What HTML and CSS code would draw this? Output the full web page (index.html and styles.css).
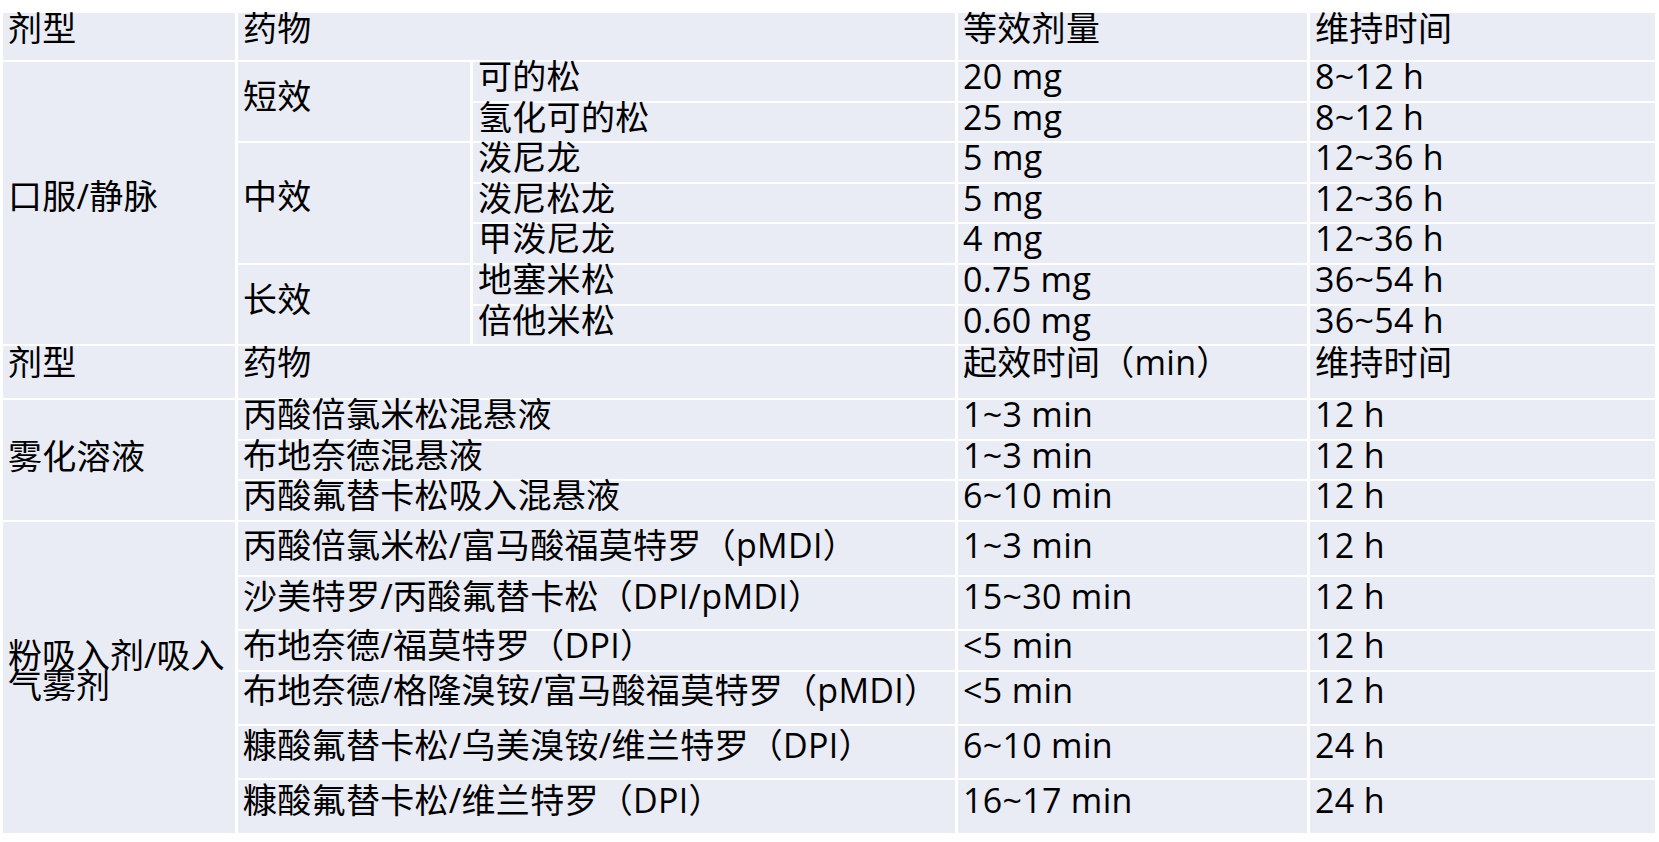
FILE: index.html
```html
<!DOCTYPE html>
<html lang="zh-CN">
<head>
<meta charset="utf-8">
<title>糖皮质激素剂型对照表</title>
<link rel="stylesheet" href="styles.css">
</head>
<body>
<table class="sheet">
  <colgroup>
    <col class="c1"><col class="c2"><col class="c3"><col class="c4"><col class="c5">
  </colgroup>
  <tbody>
    <tr class="hd1">
      <td>剂型</td><td colspan="2">药物</td><td>等效剂量</td><td>维持时间</td>
    </tr>
    <tr class="rw">
      <td rowspan="7" class="grp g-oral">口服/静脉</td>
      <td rowspan="2" class="grp g-short">短效</td>
      <td>可的松</td><td>20 mg</td><td>8~12 h</td>
    </tr>
    <tr class="rw"><td>氢化可的松</td><td>25 mg</td><td>8~12 h</td></tr>
    <tr class="rw">
      <td rowspan="3" class="grp g-mid">中效</td>
      <td>泼尼龙</td><td>5 mg</td><td>12~36 h</td>
    </tr>
    <tr class="rw"><td>泼尼松龙</td><td>5 mg</td><td>12~36 h</td></tr>
    <tr class="rw"><td>甲泼尼龙</td><td>4 mg</td><td>12~36 h</td></tr>
    <tr class="rw">
      <td rowspan="2" class="grp g-long">长效</td>
      <td>地塞米松</td><td>0.75 mg</td><td>36~54 h</td>
    </tr>
    <tr class="rw"><td>倍他米松</td><td>0.60 mg</td><td>36~54 h</td></tr>
    <tr class="hd2">
      <td>剂型</td><td colspan="2">药物</td><td>起效时间（min）</td><td>维持时间</td>
    </tr>
    <tr class="rw">
      <td rowspan="3" class="grp g-neb">雾化溶液</td>
      <td colspan="2">丙酸倍氯米松混悬液</td><td>1~3 min</td><td>12 h</td>
    </tr>
    <tr class="rw"><td colspan="2">布地奈德混悬液</td><td>1~3 min</td><td>12 h</td></tr>
    <tr class="rw"><td colspan="2">丙酸氟替卡松吸入混悬液</td><td>6~10 min</td><td>12 h</td></tr>
    <tr class="ra">
      <td rowspan="6" class="grp g-inh">粉吸入剂/吸入气雾剂</td>
      <td colspan="2">丙酸倍氯米松/富马酸福莫特罗（pMDI）</td><td>1~3 min</td><td>12 h</td>
    </tr>
    <tr class="rb"><td colspan="2">沙美特罗/丙酸氟替卡松（DPI/pMDI）</td><td>15~30 min</td><td>12 h</td></tr>
    <tr class="rc"><td colspan="2">布地奈德/福莫特罗（DPI）</td><td>&lt;5 min</td><td>12 h</td></tr>
    <tr class="rd"><td colspan="2">布地奈德/格隆溴铵/富马酸福莫特罗（pMDI）</td><td>&lt;5 min</td><td>12 h</td></tr>
    <tr class="re"><td colspan="2">糠酸氟替卡松/乌美溴铵/维兰特罗（DPI）</td><td>6~10 min</td><td>24 h</td></tr>
    <tr class="rf"><td colspan="2">糠酸氟替卡松/维兰特罗（DPI）</td><td>16~17 min</td><td>24 h</td></tr>
  </tbody>
</table>
</body>
</html>
```

FILE: styles.css
```css
html, body {
  margin: 0;
  padding: 0;
  background: #ffffff;
}

.sheet {
  margin-top: 11px;
  width: 1658px;
  table-layout: fixed;
  border-collapse: separate;
  border-spacing: 3px 2px;
  font-family: "Open Sans", "Noto Sans CJK SC", sans-serif;
  font-size: 34px;
  color: #000000;
}

.c1 { width: 232px; }
.c2 { width: 232px; }
.c3 { width: 482px; }
.c4 { width: 349px; }
.c5 { width: 345px; }

.sheet td {
  background: #e9ebf5;
  padding: 0 4px 0 5px;
  line-height: 28px;
  vertical-align: top;
  white-space: nowrap;
  letter-spacing: 0.3px;
}

.hd1 { height: 47px; }
.hd1 td { padding-top: 1px; }

.rw { height: 38.6px; }

.hd2 { height: 52px; }
.hd2 td { padding-top: 2px; }

.ra { height: 53px; }
.ra td { padding-top: 9px; }
.rb { height: 52px; }
.rb td { padding-top: 5px; }
.rc { height: 39px; }
.rc td { padding-top: 0; }
.rd { height: 52px; }
.rd td { padding-top: 4px; }
.re { height: 52px; }
.re td { padding-top: 5px; }
.rf { height: 53px; }
.rf td { padding-top: 6px; }

.sheet td.grp {
  vertical-align: middle;
  padding-top: 0;
}

.sheet td.g-oral { padding-bottom: 15px; }
.sheet td.g-short { padding-bottom: 11px; }
.sheet td.g-mid { padding-bottom: 14px; }
.sheet td.g-long { padding-bottom: 11px; }
.sheet td.g-neb { padding-bottom: 8px; }
.sheet td.g-inh {
  padding-bottom: 14px;
  line-height: 30px;
  white-space: normal;
  letter-spacing: 0;
}
```
